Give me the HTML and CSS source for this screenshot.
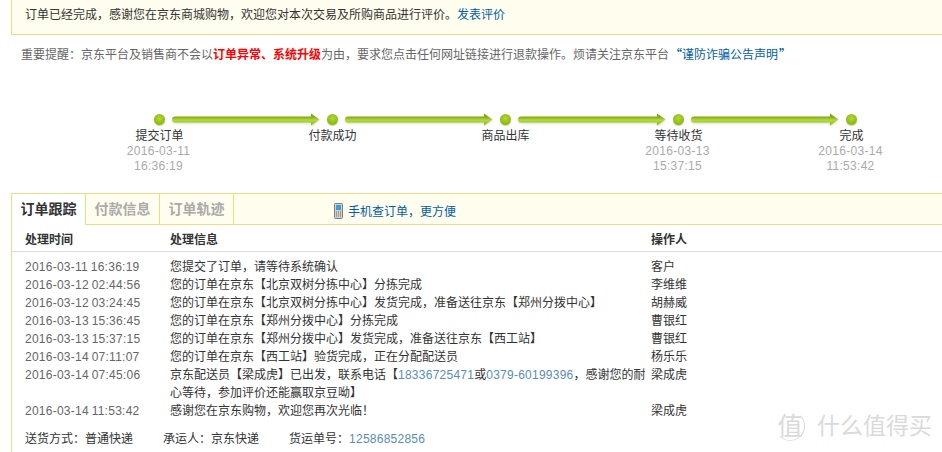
FILE: index.html
```html
<!DOCTYPE html>
<html lang="en">
<head>
    <meta charset="UTF-8">
    <meta name="viewport" content="width=device-width, initial-scale=1.0">
    <title>订单跟踪</title>
    <link rel="stylesheet" href="styles.css">
</head>
<body>
    <svg class="defs" width="0" height="0">
        <defs>
            <linearGradient id="shaft" x1="0" y1="0" x2="0" y2="1">
                <stop offset="0" stop-color="#7ba30a"/>
                <stop offset="0.3" stop-color="#86ae12"/>
                <stop offset="0.55" stop-color="#b6d940"/>
                <stop offset="1" stop-color="#8cb418"/>
            </linearGradient>
            <symbol id="arrow" viewBox="0 0 148 14">
                <path d="M3 3.500H139V0.500L147.500 6.500L139 12.500V9.500H3A3 3 0 0 1 3 3.500Z" fill="url(#shaft)"/>
            </symbol>
        </defs>
    </svg>

    <div class="page">
        <div class="notice">订单已经完成，感谢您在京东商城购物，欢迎您对本次交易及所购商品进行评价。<a href="#">发表评价</a></div>
        <p class="reminder">重要提醒：京东平台及销售商不会以<strong>订单异常、系统升级</strong>为由，要求您点击任何网址链接进行退款操作。烦请关注京东平台<a class="notice-link" href="#"><b class="quote">“</b>谨防诈骗公告声明<b class="quote">”</b></a></p>

        <div class="track">
            <span class="dot"></span>
            <svg class="arrow"><use href="#arrow"/></svg>
            <span class="dot"></span>
            <svg class="arrow"><use href="#arrow"/></svg>
            <span class="dot"></span>
            <svg class="arrow"><use href="#arrow"/></svg>
            <span class="dot"></span>
            <svg class="arrow"><use href="#arrow"/></svg>
            <span class="dot"></span>
        </div>
        <div class="steps">
            <div class="step">提交订单<div class="date">2016-03-11<br>16:36:19</div></div>
            <div class="step">付款成功</div>
            <div class="step">商品出库</div>
            <div class="step">等待收货<div class="date">2016-03-13<br>15:37:15</div></div>
            <div class="step">完成<div class="date">2016-03-14<br>11:53:42</div></div>
        </div>

        <div class="panel">
            <div class="tabs">
                <span class="tab active">订单跟踪</span>
                <span class="tab">付款信息</span>
                <span class="tab">订单轨迹</span>
                <a class="phone" href="#">
                    <svg width="9" height="16" viewBox="0 0 9 16">
                        <rect x="0.500" y="0.500" width="8" height="15" rx="1" fill="#d2d2cc" stroke="#7d7d75"/>
                        <rect x="2" y="2" width="5" height="5" fill="#3d9be0"/>
                        <path d="M2 9h1M4 9h1M6 9h1M2 11h1M4 11h1M6 11h1M2 13h1M4 13h1M6 13h1" stroke="#66665f"/>
                    </svg>
                    手机查订单，更方便
                </a>
            </div>
            <table class="log">
                <thead>
                    <tr><th class="col-time">处理时间</th><th class="col-info">处理信息</th><th>操作人</th></tr>
                </thead>
                <tbody>
                    <tr><td>2016-03-11 16:36:19</td><td>您提交了订单，请等待系统确认</td><td>客户</td></tr>
                    <tr><td>2016-03-12 02:44:56</td><td>您的订单在京东【北京双树分拣中心】分拣完成</td><td>李维维</td></tr>
                    <tr><td>2016-03-12 03:24:45</td><td>您的订单在京东【北京双树分拣中心】发货完成，准备送往京东【郑州分拨中心】</td><td>胡赫威</td></tr>
                    <tr><td>2016-03-13 15:36:45</td><td>您的订单在京东【郑州分拨中心】分拣完成</td><td>曹银红</td></tr>
                    <tr><td>2016-03-13 15:37:15</td><td>您的订单在京东【郑州分拨中心】发货完成，准备送往京东【西工站】</td><td>曹银红</td></tr>
                    <tr><td>2016-03-14 07:11:07</td><td>您的订单在京东【西工站】验货完成，正在分配配送员</td><td>杨乐乐</td></tr>
                    <tr><td>2016-03-14 07:45:06</td><td>京东配送员【梁成虎】已出发，联系电话【<span class="num">18336725471</span>或<span class="num">0379-60199396</span>，感谢您的耐心等待，参加评价还能赢取京豆呦】</td><td>梁成虎</td></tr>
                    <tr><td>2016-03-14 11:53:42</td><td>感谢您在京东购物，欢迎您再次光临！</td><td>梁成虎</td></tr>
                </tbody>
            </table>
            <div class="shipping">
                <span>送货方式：普通快递</span>
                <span>承运人：京东快递</span>
                <span>货运单号：<span class="num">12586852856</span></span>
            </div>
        </div>
    </div>

    <div class="watermark">
        <span class="seal">值</span>
        <span>什么值得买</span>
    </div>
</body>
</html>
```

FILE: styles.css
```css
html, body {
    height: 452px;
    overflow: hidden;
}
body {
    margin: 0;
    font-family: "Liberation Sans", "Noto Sans CJK SC", sans-serif;
    font-size: 12px;
    color: #333;
    background: #fff;
}
a {
    color: #005ea7;
    text-decoration: none;
}
.defs {
    position: absolute;
}
.page {
    margin-left: 11px;
}
.notice {
    height: 34px;
    line-height: 30px;
    padding-left: 13px;
    background: #fffdee;
    border-style: solid;
    border-width: 0 0 1px 1px;
    border-color: #f0dc82;
}
.reminder {
    height: 18px;
    margin: 10px 0 0;
    padding-left: 10px;
    line-height: 18px;
    color: #666;
}
.reminder strong {
    color: #f00;
}
.quote {
    margin-left: 1px;
    font-family: "Noto Sans CJK SC", sans-serif;
}
.track {
    display: flex;
    align-items: center;
    gap: 7px;
    height: 13px;
    margin-top: 50px;
    padding-left: 143px;
}
.dot {
    width: 11px;
    height: 11px;
    border-radius: 50%;
    background: radial-gradient(circle at 50% 40%, #b3d832 0, #8fbb12 65%, #76a00a 100%);
    box-shadow: 0 1px 1px #cfd8b0;
}
.arrow {
    width: 148px;
    height: 14px;
    filter: drop-shadow(0 1px 1px #d5dcbc);
}
.steps {
    display: flex;
    margin-top: 3px;
    padding-left: 62px;
}
.step {
    width: 173px;
    line-height: 15px;
    text-align: center;
    color: #333;
}
.date {
    margin-left: -2px;
    color: #aaa;
    letter-spacing: 0.3px;
}
.panel {
    height: 258px;
    margin-top: 19px;
    border-top: 1px solid #f0dc82;
    border-left: 1px solid #f0dc82;
}
.tabs {
    display: flex;
    height: 30px;
    background: #fffdee;
    border-bottom: 1px solid #f0dc82;
}
.tab {
    width: 73px;
    height: 31px;
    line-height: 30px;
    text-align: center;
    font-size: 14px;
    font-weight: bold;
    color: #aaa;
    border-right: 1px solid #f0dc82;
}
.tab.active {
    color: #333;
    background: #fff;
}
.phone {
    display: flex;
    align-items: center;
    gap: 5px;
    height: 33px;
    margin-left: 100px;
}
.log {
    width: 100%;
    table-layout: fixed;
    border-collapse: collapse;
}
.log th {
    height: 26px;
    padding: 0;
    text-align: left;
    color: #333;
    border-bottom: 1px solid #ddd;
}
.log th:first-child, .log td:first-child {
    padding-left: 13px;
}
.col-time {
    width: 145px;
}
.col-info {
    width: 481px;
}
.log td {
    padding: 0;
    line-height: 18px;
    vertical-align: top;
}
.log td:first-child {
    color: #666;
    letter-spacing: 0.25px;
    word-spacing: -0.8px;
}
.log tbody tr:first-child td {
    padding-top: 6px;
}
.num {
    color: #5a8cb8;
    letter-spacing: 0.25px;
}
.shipping {
    display: flex;
    gap: 30px;
    margin-top: 10px;
    padding-left: 13px;
    line-height: 18px;
}
.watermark {
    position: absolute;
    left: 775px;
    top: 411px;
    display: flex;
    align-items: center;
    gap: 12px;
    font-size: 23px;
    line-height: 30px;
    color: #dadada;
}
.seal {
    width: 30px;
    height: 30px;
    font-size: 25px;
    line-height: 28px;
    text-align: center;
    border-radius: 50%;
    border: 1px solid transparent;
    border-right-color: #d6d6d6;
    border-bottom-color: #e2e2e2;
    box-sizing: border-box;
}
```
